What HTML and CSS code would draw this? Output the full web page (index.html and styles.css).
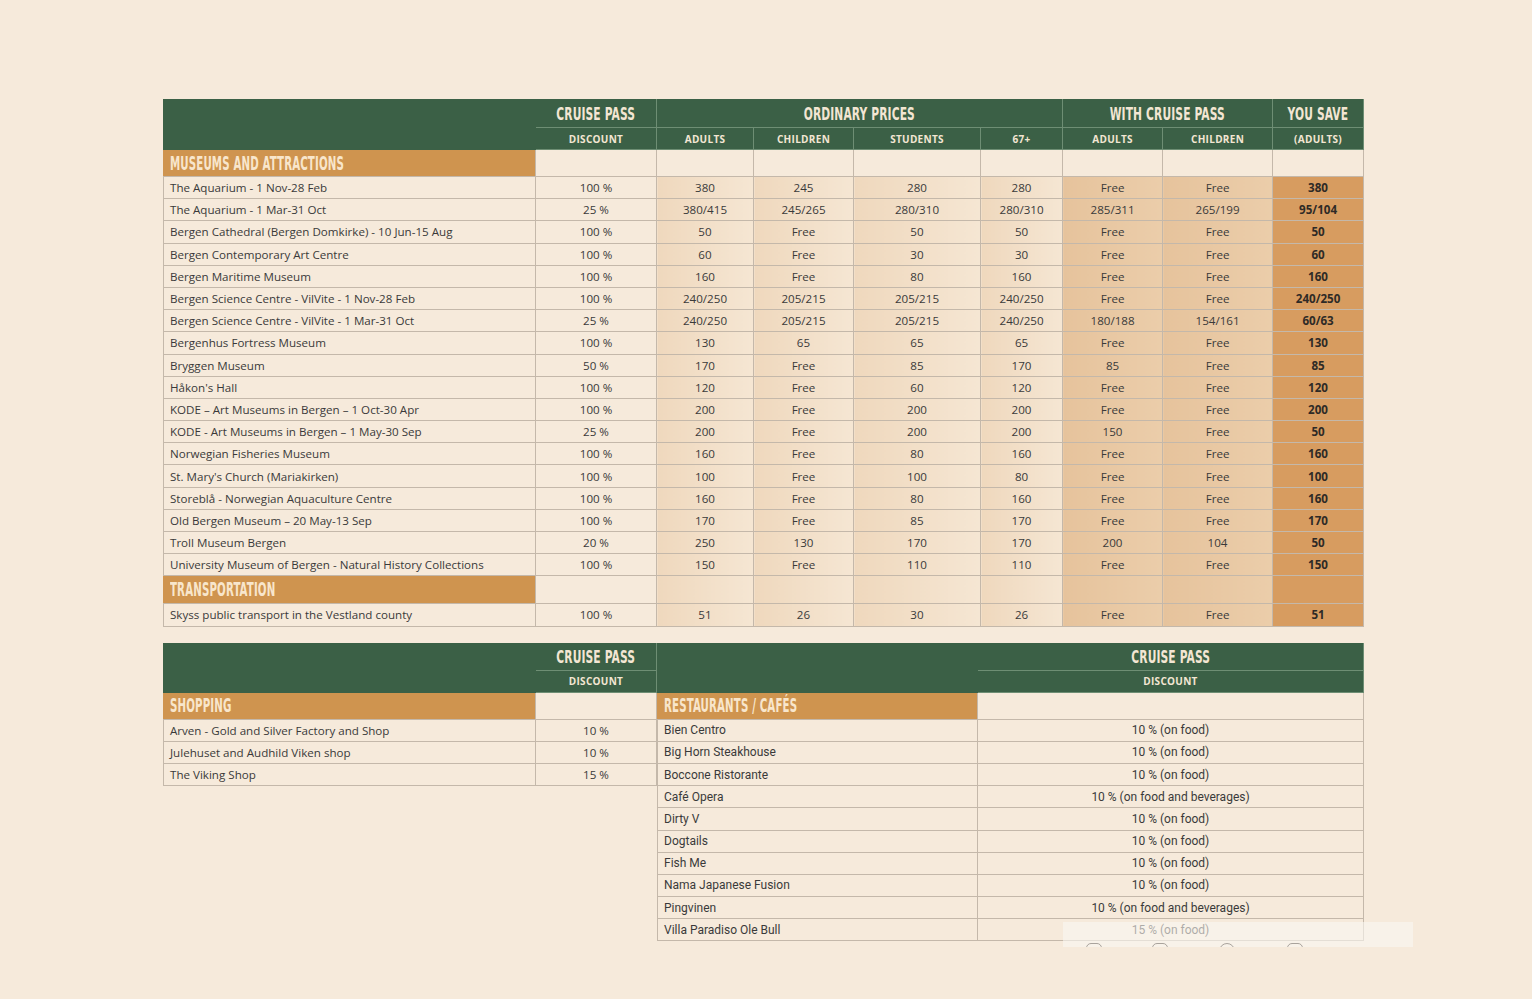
FILE: index.html
```html
<!DOCTYPE html>
<html lang="en">
<head>
<meta charset="utf-8">
<title>Cruise Pass prices</title>
<link rel="stylesheet" href="styles.css">
</head>
<body>
<main class="page">
  <table class="grid main">
    <colgroup>
      <col style="width:372px"><col style="width:121px"><col style="width:97px"><col style="width:100px"><col style="width:127px"><col style="width:82px"><col style="width:100px"><col style="width:110px"><col style="width:91px">
    </colgroup>
    <thead>
      <tr class="h1">
        <th rowspan="2" class="blank"></th>
        <th><span class="disp">Cruise Pass</span></th>
        <th colspan="4"><span class="disp">Ordinary Prices</span></th>
        <th colspan="2"><span class="disp">With Cruise Pass</span></th>
        <th><span class="disp">You Save</span></th>
      </tr>
      <tr class="h2">
        <th>DISCOUNT</th><th>ADULTS</th><th>CHILDREN</th><th>STUDENTS</th><th>67+</th><th>ADULTS</th><th>CHILDREN</th><th>(ADULTS)</th>
      </tr>
    </thead>
    <tbody>
      <tr class="sec"><td class="sect"><span class="disp">Museums and Attractions</span></td><td></td><td></td><td></td><td></td><td></td><td></td><td></td><td></td></tr>
      <tr><td class="name">The Aquarium - 1 Nov-28 Feb</td><td>100 %</td><td class="ord">380</td><td class="ord">245</td><td class="ord">280</td><td class="ord">280</td><td class="wcp">Free</td><td class="wcp">Free</td><td class="save">380</td></tr>
      <tr><td class="name">The Aquarium - 1 Mar-31 Oct</td><td>25 %</td><td class="ord">380/415</td><td class="ord">245/265</td><td class="ord">280/310</td><td class="ord">280/310</td><td class="wcp">285/311</td><td class="wcp">265/199</td><td class="save">95/104</td></tr>
      <tr><td class="name">Bergen Cathedral (Bergen Domkirke) - 10 Jun-15 Aug</td><td>100 %</td><td class="ord">50</td><td class="ord">Free</td><td class="ord">50</td><td class="ord">50</td><td class="wcp">Free</td><td class="wcp">Free</td><td class="save">50</td></tr>
      <tr><td class="name">Bergen Contemporary Art Centre</td><td>100 %</td><td class="ord">60</td><td class="ord">Free</td><td class="ord">30</td><td class="ord">30</td><td class="wcp">Free</td><td class="wcp">Free</td><td class="save">60</td></tr>
      <tr><td class="name">Bergen Maritime Museum</td><td>100 %</td><td class="ord">160</td><td class="ord">Free</td><td class="ord">80</td><td class="ord">160</td><td class="wcp">Free</td><td class="wcp">Free</td><td class="save">160</td></tr>
      <tr><td class="name">Bergen Science Centre - VilVite - 1 Nov-28 Feb</td><td>100 %</td><td class="ord">240/250</td><td class="ord">205/215</td><td class="ord">205/215</td><td class="ord">240/250</td><td class="wcp">Free</td><td class="wcp">Free</td><td class="save">240/250</td></tr>
      <tr><td class="name">Bergen Science Centre - VilVite - 1 Mar-31 Oct</td><td>25 %</td><td class="ord">240/250</td><td class="ord">205/215</td><td class="ord">205/215</td><td class="ord">240/250</td><td class="wcp">180/188</td><td class="wcp">154/161</td><td class="save">60/63</td></tr>
      <tr><td class="name">Bergenhus Fortress Museum</td><td>100 %</td><td class="ord">130</td><td class="ord">65</td><td class="ord">65</td><td class="ord">65</td><td class="wcp">Free</td><td class="wcp">Free</td><td class="save">130</td></tr>
      <tr><td class="name">Bryggen Museum</td><td>50 %</td><td class="ord">170</td><td class="ord">Free</td><td class="ord">85</td><td class="ord">170</td><td class="wcp">85</td><td class="wcp">Free</td><td class="save">85</td></tr>
      <tr><td class="name">Håkon's Hall</td><td>100 %</td><td class="ord">120</td><td class="ord">Free</td><td class="ord">60</td><td class="ord">120</td><td class="wcp">Free</td><td class="wcp">Free</td><td class="save">120</td></tr>
      <tr><td class="name">KODE – Art Museums in Bergen – 1 Oct-30 Apr</td><td>100 %</td><td class="ord">200</td><td class="ord">Free</td><td class="ord">200</td><td class="ord">200</td><td class="wcp">Free</td><td class="wcp">Free</td><td class="save">200</td></tr>
      <tr><td class="name">KODE - Art Museums in Bergen – 1 May-30 Sep</td><td>25 %</td><td class="ord">200</td><td class="ord">Free</td><td class="ord">200</td><td class="ord">200</td><td class="wcp">150</td><td class="wcp">Free</td><td class="save">50</td></tr>
      <tr><td class="name">Norwegian Fisheries Museum</td><td>100 %</td><td class="ord">160</td><td class="ord">Free</td><td class="ord">80</td><td class="ord">160</td><td class="wcp">Free</td><td class="wcp">Free</td><td class="save">160</td></tr>
      <tr><td class="name">St. Mary's Church (Mariakirken)</td><td>100 %</td><td class="ord">100</td><td class="ord">Free</td><td class="ord">100</td><td class="ord">80</td><td class="wcp">Free</td><td class="wcp">Free</td><td class="save">100</td></tr>
      <tr><td class="name">Storeblå - Norwegian Aquaculture Centre</td><td>100 %</td><td class="ord">160</td><td class="ord">Free</td><td class="ord">80</td><td class="ord">160</td><td class="wcp">Free</td><td class="wcp">Free</td><td class="save">160</td></tr>
      <tr><td class="name">Old Bergen Museum – 20 May-13 Sep</td><td>100 %</td><td class="ord">170</td><td class="ord">Free</td><td class="ord">85</td><td class="ord">170</td><td class="wcp">Free</td><td class="wcp">Free</td><td class="save">170</td></tr>
      <tr><td class="name">Troll Museum Bergen</td><td>20 %</td><td class="ord">250</td><td class="ord">130</td><td class="ord">170</td><td class="ord">170</td><td class="wcp">200</td><td class="wcp">104</td><td class="save">50</td></tr>
      <tr><td class="name">University Museum of Bergen - Natural History Collections</td><td>100 %</td><td class="ord">150</td><td class="ord">Free</td><td class="ord">110</td><td class="ord">110</td><td class="wcp">Free</td><td class="wcp">Free</td><td class="save">150</td></tr>
      <tr class="sec tall"><td class="sect"><span class="disp">Transportation</span></td><td></td><td class="ord"></td><td class="ord"></td><td class="ord"></td><td class="ord"></td><td class="wcp"></td><td class="wcp"></td><td class="save"></td></tr>
      <tr><td class="name">Skyss public transport in the Vestland county</td><td>100 %</td><td class="ord">51</td><td class="ord">26</td><td class="ord">30</td><td class="ord">26</td><td class="wcp">Free</td><td class="wcp">Free</td><td class="save">51</td></tr>
    </tbody>
  </table>

  <div class="lower">
    <table class="grid shop">
      <colgroup><col style="width:372px"><col style="width:121px"></colgroup>
      <thead>
        <tr class="h1"><th rowspan="2" class="blank"></th><th><span class="disp">Cruise Pass</span></th></tr>
        <tr class="h2"><th>DISCOUNT</th></tr>
      </thead>
      <tbody>
        <tr class="sec"><td class="sect"><span class="disp">Shopping</span></td><td></td></tr>
        <tr><td class="name">Arven - Gold and Silver Factory and Shop</td><td>10 %</td></tr>
        <tr><td class="name">Julehuset and Audhild Viken shop</td><td>10 %</td></tr>
        <tr><td class="name">The Viking Shop</td><td>15 %</td></tr>
      </tbody>
    </table>

    <table class="grid rest">
      <colgroup><col style="width:320px"><col style="width:386px"></colgroup>
      <thead>
        <tr class="h1"><th rowspan="2" class="blank"></th><th><span class="disp">Cruise Pass</span></th></tr>
        <tr class="h2"><th>DISCOUNT</th></tr>
      </thead>
      <tbody>
        <tr class="sec"><td class="sect"><span class="disp">Restaurants / Cafés</span></td><td></td></tr>
        <tr><td class="name">Bien Centro</td><td>10 % (on food)</td></tr>
        <tr><td class="name">Big Horn Steakhouse</td><td>10 % (on food)</td></tr>
        <tr><td class="name">Boccone Ristorante</td><td>10 % (on food)</td></tr>
        <tr><td class="name">Café Opera</td><td>10 % (on food and beverages)</td></tr>
        <tr><td class="name">Dirty V</td><td>10 % (on food)</td></tr>
        <tr><td class="name">Dogtails</td><td>10 % (on food)</td></tr>
        <tr><td class="name">Fish Me</td><td>10 % (on food)</td></tr>
        <tr><td class="name">Nama Japanese Fusion</td><td>10 % (on food)</td></tr>
        <tr><td class="name">Pingvinen</td><td>10 % (on food and beverages)</td></tr>
        <tr><td class="name">Villa Paradiso Ole Bull</td><td>15 % (on food)</td></tr>
      </tbody>
    </table>
  </div>

  <div class="toolbar" aria-hidden="true">
    <span class="dot"></span><span class="dot"></span><span class="dot"></span><span class="dot"></span>
  </div>
</main>
</body>
</html>
```

FILE: styles.css
```css
html, body {
  margin: 0;
  padding: 0;
  background: #f6eadb;
}
body {
  font-family: "Open Sans", "Liberation Sans", sans-serif;
  color: #3a3a3a;
  width: 1532px;
  height: 999px;
  overflow: hidden;
}
.page {
  position: relative;
  padding: 99px 0 0 163px;
  height: 900px;
}
.grid {
  border-collapse: collapse;
  table-layout: fixed;
  font-size: 11.6px;
}
.main { width: 1200px; }
.grid th {
  background: #3b6046;
  color: #f3e6d3;
  border: 1px solid #6e8e74;
  padding: 0;
  text-align: center;
  white-space: nowrap;
  overflow: hidden;
}
.grid th.blank { border-color: #3b6046; }
.grid thead tr:first-child th { border-top-color: #3b6046; }
.grid tr.h1 th { height: 27px; }
.grid tr.h2 th {
  height: 21px;
  font-family: "Open Sans", "Liberation Sans", sans-serif;
  font-weight: 700;
  font-size: 10px;
  letter-spacing: 0.3px;
}
.lower .grid tr.h1 th { height: 26px; }
.lower .grid tr.h2 th { height: 21px; }
.disp {
  display: inline-block;
  font-family: "Liberation Sans Narrow", "DejaVu Sans Condensed", "Liberation Sans", sans-serif;
  font-weight: 700;
  font-size: 18px;
  line-height: 18px;
  text-transform: uppercase;
  transform: scaleX(0.68);
  letter-spacing: 0.2px;
}
.grid tr.h1 th .disp {
  transform: scaleX(0.66);
  margin: 0 -30px;
}
.grid td {
  border: 1px solid #c4b8aa;
  background: #f6eadb;
  height: 21.2px;
  padding: 0;
  text-align: center;
  white-space: nowrap;
  overflow: hidden;
}
.grid tr.sec td { height: 26px; }
.grid tr.sec.tall td { height: 27px; }
.grid td.sect {
  background: #cf944f;
  color: #f8e6cc;
  text-align: left;
  padding-left: 6px;
  border-color: #cf944f #c4b8aa #c4b8aa #cf944f;
}
.grid td.sect .disp {
  transform-origin: left center;
  transform: scaleX(0.6);
  font-size: 19px;
}
.grid td.name {
  text-align: left;
  padding-left: 6px;
}
.grid td.ord {
  background: linear-gradient(to right, #efd8bd, #f5e6d3);
}
.grid td.wcp {
  background: linear-gradient(to right, #e6c39c, #ebcdaa);
}
.grid td.save {
  background: #d79c60;
  font-weight: 700;
  color: #2e2a26;
}
.lower {
  display: flex;
  align-items: flex-start;
  margin-top: 16px;
}
.shop { width: 493px; }
.rest {
  width: 706px;
  font-family: "Roboto", "Liberation Sans", sans-serif;
  font-size: 12px;
}
.rest td { color: #3a3a3a; }
.rest td.name { padding-left: 6px; }
.toolbar {
  position: absolute;
  left: 1063px;
  top: 922px;
  width: 350px;
  height: 25px;
  background: rgba(250, 246, 242, 0.6);
  overflow: hidden;
}
.toolbar .dot {
  position: absolute;
  top: 21px;
  width: 14px;
  height: 14px;
  border: 1px solid #a9a39c;
  border-radius: 5px;
}
.toolbar .dot:nth-child(1) { left: 23px; }
.toolbar .dot:nth-child(2) { left: 89px; }
.toolbar .dot:nth-child(3) { left: 156px; border-radius: 50%; }
.toolbar .dot:nth-child(4) { left: 224px; }
```
